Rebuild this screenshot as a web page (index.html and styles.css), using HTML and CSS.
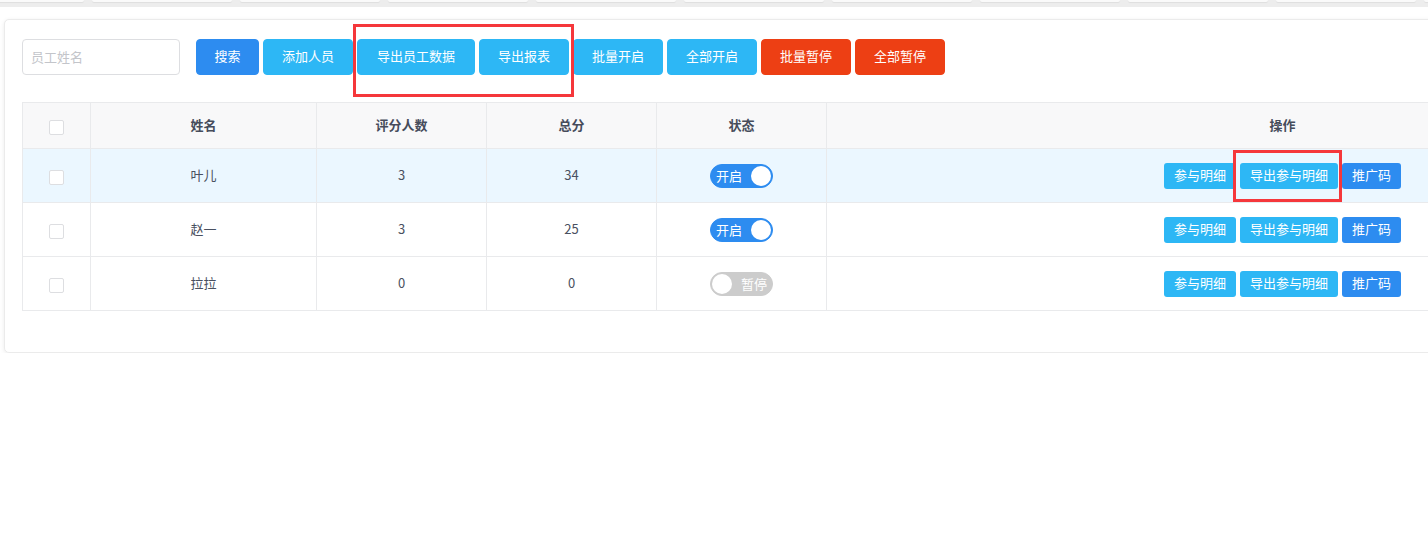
FILE: index.html
```html
<!DOCTYPE html>
<html lang="zh">
<head>
<meta charset="utf-8">
<link rel="stylesheet" href="styles.css">
</head>
<body>
<div class="page">
  <div class="tabs">
    <div class="tab"></div><div class="tab"></div><div class="tab"></div><div class="tab"></div><div class="tab"></div><div class="tab"></div><div class="tab"></div><div class="tab"></div><div class="tab"></div><div class="tab"></div><div class="tab"></div>
  </div>
  <div class="card">
    <div class="toolbar">
      <input class="search" placeholder="员工姓名">
      <div class="btns">
        <button class="btn primary narrow">搜索</button>
        <button class="btn info">添加人员</button>
        <span class="mark-wrap">
          <button class="btn info wide">导出员工数据</button>
          <button class="btn info">导出报表</button>
          <span class="mark mark-top"></span>
        </span>
        <button class="btn info">批量开启</button>
        <button class="btn info">全部开启</button>
        <button class="btn error">批量暂停</button>
        <button class="btn error">全部暂停</button>
      </div>
    </div>
    <table class="grid">
      <colgroup>
        <col class="c-check"><col class="c-name"><col class="c-num"><col class="c-num"><col class="c-num"><col class="c-ops">
      </colgroup>
      <thead>
        <tr><th><span class="chk"></span></th><th>姓名</th><th>评分人数</th><th>总分</th><th>状态</th><th>操作</th></tr>
      </thead>
      <tbody>
        <tr class="hover">
          <td><span class="chk"></span></td><td>叶儿</td><td>3</td><td>34</td>
          <td><span class="switch on"><span class="sw-text">开启</span><span class="knob"></span></span></td>
          <td><div class="ops"><button class="sbtn info">参与明细</button><span class="mark-wrap"><button class="sbtn info">导出参与明细</button><span class="mark mark-row"></span></span><button class="sbtn primary">推广码</button></div></td>
        </tr>
        <tr>
          <td><span class="chk"></span></td><td>赵一</td><td>3</td><td>25</td>
          <td><span class="switch on"><span class="sw-text">开启</span><span class="knob"></span></span></td>
          <td><div class="ops"><button class="sbtn info">参与明细</button><button class="sbtn info">导出参与明细</button><button class="sbtn primary">推广码</button></div></td>
        </tr>
        <tr>
          <td><span class="chk"></span></td><td>拉拉</td><td>0</td><td>0</td>
          <td><span class="switch off"><span class="knob"></span><span class="sw-text">暂停</span></span></td>
          <td><div class="ops"><button class="sbtn info">参与明细</button><button class="sbtn info">导出参与明细</button><button class="sbtn primary">推广码</button></div></td>
        </tr>
      </tbody>
    </table>
  </div>
</div>
</body>
</html>
```
FILE: styles.css
```css
* { box-sizing: border-box; }
html, body { margin: 0; padding: 0; background: #fff; overflow: hidden; }
body {
  font-family: "Noto Sans CJK SC", "Liberation Sans", sans-serif;
  font-size: 13px;
  color: #495060;
  width: 1428px;
  height: 541px;
}
.page { width: 1428px; overflow: hidden; }
.tabs {
  height: 7px;
  background: #ededed;
  display: flex;
  gap: 8px;
  margin-left: -56px;
  overflow: hidden;
}
.tab {
  flex: 0 0 140px;
  height: 2px;
  background: #fafafa;
  border-radius: 0 0 4px 4px;
  box-shadow: 0 1px 1px rgba(0,0,0,0.06);
}
.card {
  margin: 12px 0 0 4px;
  width: 1752px;
  border: 1px solid #ebebeb;
  border-radius: 5px;
  background: #fff;
  box-shadow: 0 1px 4px rgba(0,0,0,0.08);
  padding: 19px 17px 41px 17px;
}
.toolbar { display: flex; align-items: center; gap: 16px; }
.search {
  width: 158px;
  height: 36px;
  border: 1px solid #dddee1;
  border-radius: 4px;
  padding: 0 8px 2px;
  font-family: inherit;
  font-size: 13px;
  color: #495060;
  outline: none;
}
.search::placeholder { color: #c3c5ca; }
.btns { display: flex; gap: 4px; align-items: center; }
.mark-wrap { position: relative; display: flex; gap: 4px; }
.btn {
  height: 36px;
  padding: 0 18px 3px;
  border: 1px solid transparent;
  border-radius: 4px;
  color: #fff;
  font-family: inherit;
  font-size: 13px;
  cursor: pointer;
}
.btn.wide { padding: 0 19px 3px; }
.btn.narrow { padding: 0 17.5px 3px; }
.primary { background: #2d8cf0; border-color: #2d8cf0; }
.info { background: #2db7f5; border-color: #2db7f5; }
.error { background: #ed3f14; border-color: #ed3f14; }
.mark {
  position: absolute;
  border: 3px solid #f5373b;
  pointer-events: none;
}
.mark-top { left: -4px; top: -15px; right: -5px; bottom: -22px; }
.mark-row { left: -7px; top: -13px; right: -4px; bottom: -13px; }

.grid {
  margin-top: 27px;
  border-collapse: collapse;
  table-layout: fixed;
  width: 1716px;
  border: 1px solid #dddee1;
}
.c-check { width: 68px; }
.c-name { width: 226px; }
.c-num { width: 170px; }
.c-ops { width: 912px; }
.grid th, .grid td {
  border: 1px solid #e9eaec;
  text-align: center;
  padding: 0 0 3px;
}
.grid th {
  height: 46px;
  background: #f8f8f9;
  font-weight: bold;
  color: #464c5b;
}
.grid td { height: 54px; background: #fff; }
.grid tr.hover td { background: #ebf7ff; }
.grid td:first-child, .grid th:first-child, .grid td:nth-child(5), .grid td:last-child { padding: 0; }
.chk {
  display: inline-block;
  width: 15px;
  height: 15px;
  border: 1px solid #dddee1;
  border-radius: 2px;
  background: #fff;
  vertical-align: middle;
}
.switch {
  display: inline-flex;
  align-items: center;
  width: 63px;
  height: 24px;
  border-radius: 12px;
  padding: 0 1px;
  vertical-align: middle;
  color: #fff;
  font-size: 13px;
  justify-content: space-between;
}
.switch.on { background: #2d8cf0; border: 1px solid #2d8cf0; padding-left: 5px; }
.switch.off { background: #ccc; border: 1px solid #ccc; padding-right: 5px; }
.knob {
  width: 20px;
  height: 20px;
  border-radius: 50%;
  background: #fff;
}
.sw-text { line-height: 1; padding-bottom: 1px; }
.ops { display: flex; justify-content: center; gap: 4px; }
.sbtn {
  height: 26px;
  padding: 0 9px 2px;
  border: 1px solid transparent;
  border-radius: 3px;
  color: #fff;
  font-family: inherit;
  font-size: 13px;
}
```
